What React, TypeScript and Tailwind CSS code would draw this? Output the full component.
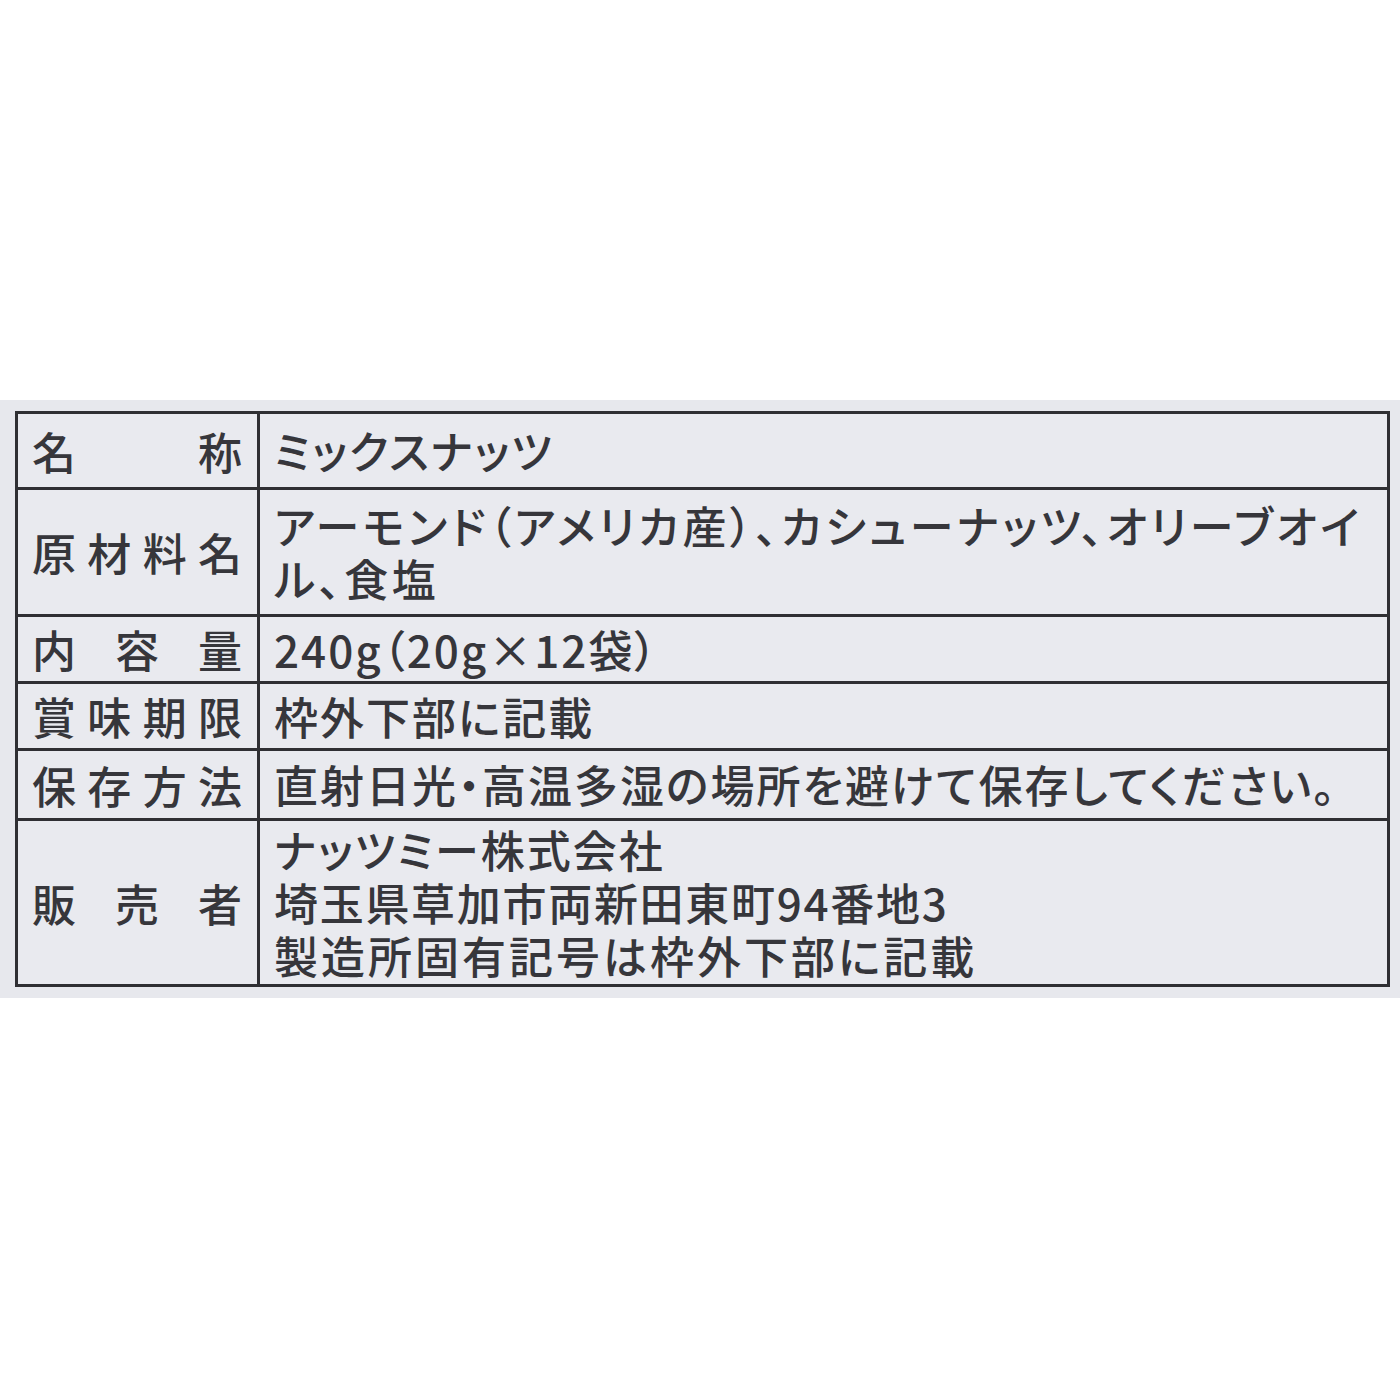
const rows: { label: string; lines: [string, string][]; h: string }[] = [
  { label: '名称', lines: [['ミックスナッツ', 'tracking-[2px]']], h: 'h-[73px]' },
  {
    label: '原材料名',
    lines: [
      ['アーモンド（アメリカ産）、カシューナッツ、オリーブオイ', 'tracking-[3.5px]'],
      ['ル、食塩', 'tracking-[3.5px]'],
    ],
    h: 'h-[127px]',
  },
  { label: '内容量', lines: [['240g（20g×12袋）', 'tracking-[2px]']], h: 'h-[67px]' },
  { label: '賞味期限', lines: [['枠外下部に記載', 'tracking-[2px]']], h: 'h-[67px]' },
  {
    label: '保存方法',
    lines: [['直射日光・高温多湿の場所を避けて保存してください。', 'tracking-[2px]']],
    h: 'h-[70px]',
  },
  {
    label: '販売者',
    lines: [
      ['ナッツミー株式会社', 'tracking-[2px]'],
      ['埼玉県草加市両新田東町94番地3', 'tracking-[1.7px]'],
      ['製造所固有記号は枠外下部に記載', 'tracking-[3px]'],
    ],
    h: 'flex-1',
  },
]

export default function App() {
  return (
    <div
      className="flex h-[1400px] w-[1400px] flex-col bg-white text-[#36363b]"
      style={{ fontFamily: '"Noto Sans CJK JP", "Noto Sans", sans-serif' }}
    >
      <div className="h-[400px]" />
      <div className="h-[598px] bg-[#e7e8ed] pt-[11px] pr-[10px] pl-[15px]">
        <div className="flex h-[576px] flex-col border-[3px] border-[#2f2f33] bg-[#e9eaef]">
          {rows.map((r, i) => (
            <div
              key={r.label}
              className={`flex ${r.h} ${i > 0 ? 'border-t-[3px] border-[#2f2f33]' : ''}`}
            >
              <div className="flex w-[242px] shrink-0 items-center justify-between border-r-[3px] border-[#2f2f33] pr-[15px] pl-[14px] text-[44px] leading-none font-medium">
                {r.label.split('').map((c, j) => (
                  <span key={j}>{c}</span>
                ))}
              </div>
              <div className="flex flex-col justify-center pl-[14px] text-[44px] leading-[53px] font-medium [font-feature-settings:'palt']">
                {r.lines.map(([text, track]) => (
                  <div key={text} className={`whitespace-nowrap ${track}`}>
                    {text}
                  </div>
                ))}
              </div>
            </div>
          ))}
        </div>
      </div>
    </div>
  )
}
